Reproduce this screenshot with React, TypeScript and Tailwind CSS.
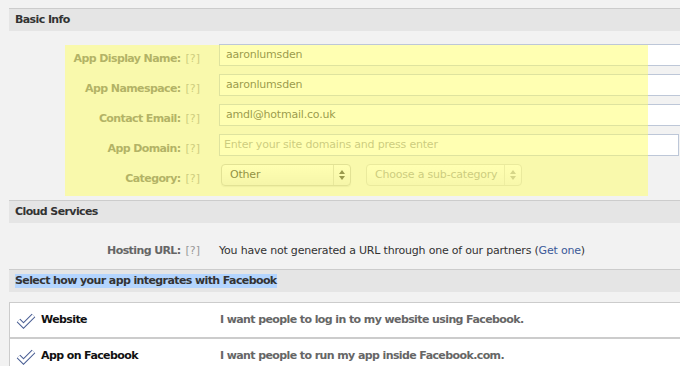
import React from 'react';

const Help = () => <span className="ml-[5px] font-normal tracking-normal text-[#999]">[?]</span>;

const CheckIcon = () => (
  <svg width="20" height="17" viewBox="0 0 20 17" className="shrink-0">
    <path d="M2.5 8.5 L7.5 13.5 L17.5 3.5" fill="none" stroke="#4a5f94" strokeWidth="5" strokeLinejoin="miter" />
    <path d="M2.5 8.5 L7.5 13.5 L17.5 3.5" fill="none" stroke="#ffffff" strokeWidth="3" strokeLinejoin="miter" />
  </svg>
);

const SelectArrows = ({ color }: { color: string }) => (
  <svg width="6" height="10" viewBox="0 0 6 10">
    <path d="M3 0 L6 4 L0 4 Z" fill={color} />
    <path d="M3 10 L6 6 L0 6 Z" fill={color} />
  </svg>
);

const SectionHeader = ({ children }: { children: React.ReactNode }) => (
  <div className="h-[23px] border-t border-[#cccccc] bg-[#e5e5e5] px-[6px] flex items-center font-bold tracking-[-0.6px] text-[#333]">
    {children}
  </div>
);

const Label = ({ children }: { children: React.ReactNode }) => (
  <div className="w-[191px] shrink-0 pt-[7px] text-right font-bold tracking-[-0.6px] text-[#666]">
    {children}
    <Help />
  </div>
);

const App = () => {
  const fields = [
    { label: 'App Display Name:', value: 'aaronlumsden' },
    { label: 'App Namespace:', value: 'aaronlumsden' },
    { label: 'Contact Email:', value: 'amdl@hotmail.co.uk' },
  ];

  const platforms = [
    { name: 'Website', text: 'I want people to log in to my website using Facebook.' },
    { name: 'App on Facebook', text: 'I want people to run my app inside Facebook.com.' },
  ];

  return (
    <div className="w-[680px] h-[388px] bg-white overflow-hidden text-[11px] tracking-[-0.2px] font-['DejaVu_Sans',sans-serif] text-[#333]">
      <div className="relative h-[366px] bg-[#f2f2f2] pt-[8px] pl-[9px] overflow-hidden">
        <SectionHeader>Basic Info</SectionHeader>

        {/* basic info form */}
        <div className="pt-[13px] flex flex-col gap-[8px]">
          {fields.map((f) => (
            <div key={f.label} className="flex items-start h-[22px]">
              <Label>{f.label}</Label>
              <div className="ml-[19px] w-[480px] h-[22px] shrink-0 border border-[#bdc7d8] bg-white pl-[6px] flex items-center text-[#333]">
                {f.value}
              </div>
            </div>
          ))}
          <div className="flex items-start h-[22px]">
            <Label>App Domain:</Label>
            <div className="ml-[19px] w-[460px] h-[22px] shrink-0 border border-[#bdc7d8] bg-white pl-[4px] flex items-center text-[#999]">
              Enter your site domains and press enter
            </div>
          </div>
          <div className="flex items-start h-[22px]">
            <Label>Category:</Label>
            <div className="ml-[21px] flex gap-[15px] shrink-0">
              <div className="w-[130px] h-[22px] rounded-[4px] border border-[#c4c4c4] bg-gradient-to-b from-white to-[#ececec] flex items-center shadow-[0_1px_1px_rgba(0,0,0,0.08)]">
                <span className="flex-1 pl-[8px] text-[#222]">Other</span>
                <span className="w-[17px] h-full border-l border-[#d0d0d0] flex items-center justify-center">
                  <SelectArrows color="#333" />
                </span>
              </div>
              <div className="w-[156px] h-[22px] rounded-[4px] border border-[#d4d4d4] bg-gradient-to-b from-white to-[#f0f0f0] flex items-center">
                <span className="flex-1 pl-[8px] text-[#999]">Choose a sub-category</span>
                <span className="w-[17px] h-full border-l border-[#dddddd] flex items-center justify-center">
                  <SelectArrows color="#aaa" />
                </span>
              </div>
            </div>
          </div>
        </div>

        <div className="mt-[14px]">
          <SectionHeader>Cloud Services</SectionHeader>
        </div>

        <div className="h-[46px] pt-[20px] flex items-start">
          <div className="w-[191px] shrink-0 text-right font-bold tracking-[-0.6px] text-[#666]">
            Hosting URL:
            <Help />
          </div>
          <div className="ml-[19px] text-[#333] whitespace-nowrap">
            You have not generated a URL through one of our partners (
            <span className="text-[#3b5998]">Get one</span>)
          </div>
        </div>

        <SectionHeader>
          <span className="bg-[#b4d5fe] leading-[14px]">Select how your app integrates with Facebook</span>
        </SectionHeader>

        <div className="mt-[10px] border-t border-l border-[#cccccc] bg-white">
          {platforms.map((p) => (
            <div key={p.name} className="h-[36px] border-b-2 border-[#cccccc] flex items-center font-bold tracking-[-0.6px]">
              <div className="w-[210px] shrink-0 flex items-center pl-[6px] gap-[5px] text-[#111]">
                <CheckIcon />
                {p.name}
              </div>
              <div className="text-[#666] whitespace-nowrap">{p.text}</div>
            </div>
          ))}
        </div>

        {/* inspector highlight overlay */}
        <div className="absolute left-[65px] top-[45px] w-[583px] h-[151px] bg-[#ffff66]/50 pointer-events-none" />
      </div>
    </div>
  );
};

export default App;
